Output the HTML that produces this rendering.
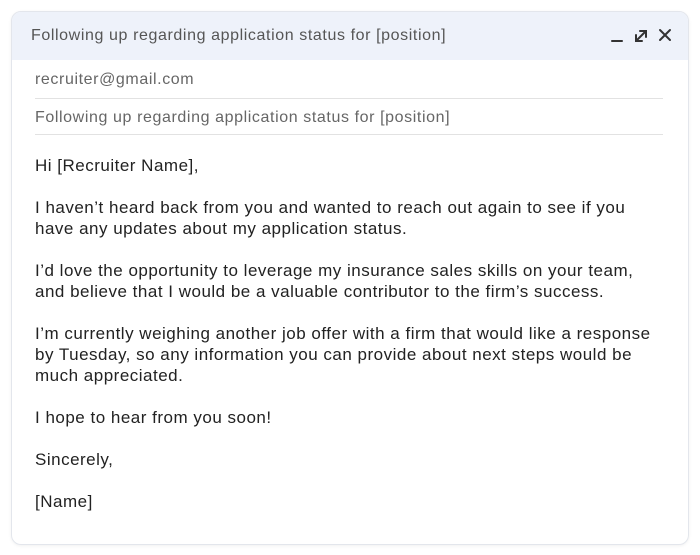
<!DOCTYPE html>
<html><head><style>
body{margin:0;background:#fff;width:700px;height:555px;font-family:"Liberation Sans",sans-serif;}
.card{position:absolute;left:11px;top:11px;width:676px;height:532px;border:1px solid #e3e6ec;border-radius:10px;overflow:hidden;box-shadow:0 1px 3px rgba(0,0,0,0.06);}
.hdr{height:48px;background:#eef2fa;position:relative;}
.hdr .t{position:absolute;left:19px;top:15px;font-size:16px;color:#555;letter-spacing:0.6px;}
.icons{position:absolute;right:14px;top:14px;}
.f{position:absolute;left:23px;right:25px;font-size:16px;color:#666;border-bottom:1px solid #e2e2e2;letter-spacing:0.6px;}
.body{position:absolute;left:23px;top:143px;font-size:17px;color:#222;line-height:21px;letter-spacing:0.5px;}
.body p{margin:0 0 21px 0;}
</style></head><body>
<div class="card">
<div class="hdr"><div class="t">Following up regarding application status for [position]</div>
<svg class="icons" width="64" height="20" viewBox="0 0 64 20" fill="none" stroke="#333" stroke-width="2" stroke-linecap="round">
<path d="M2 15H12"/>
<path d="M26 15L36 5M30 5H36V11M26 9V15H32"/>
<path d="M50 4L60 14M60 4L50 14"/>
</svg></div>
<div class="f" style="top:59px;height:27px;">recruiter@gmail.com</div>
<div class="f" style="top:97px;height:25px;">Following up regarding application status for [position]</div>
<div class="body">
<p>Hi [Recruiter Name],</p>
<p>I haven’t heard back from you and wanted to reach out again to see if you<br>have any updates about my application status.</p>
<p>I’d love the opportunity to leverage my insurance sales skills on your team,<br>and believe that I would be a valuable contributor to the firm’s success.</p>
<p>I’m currently weighing another job offer with a firm that would like a response<br>by Tuesday, so any information you can provide about next steps would be<br>much appreciated.</p>
<p>I hope to hear from you soon!</p>
<p>Sincerely,</p>
<p>[Name]</p>
</div>
</div>
</body></html>
